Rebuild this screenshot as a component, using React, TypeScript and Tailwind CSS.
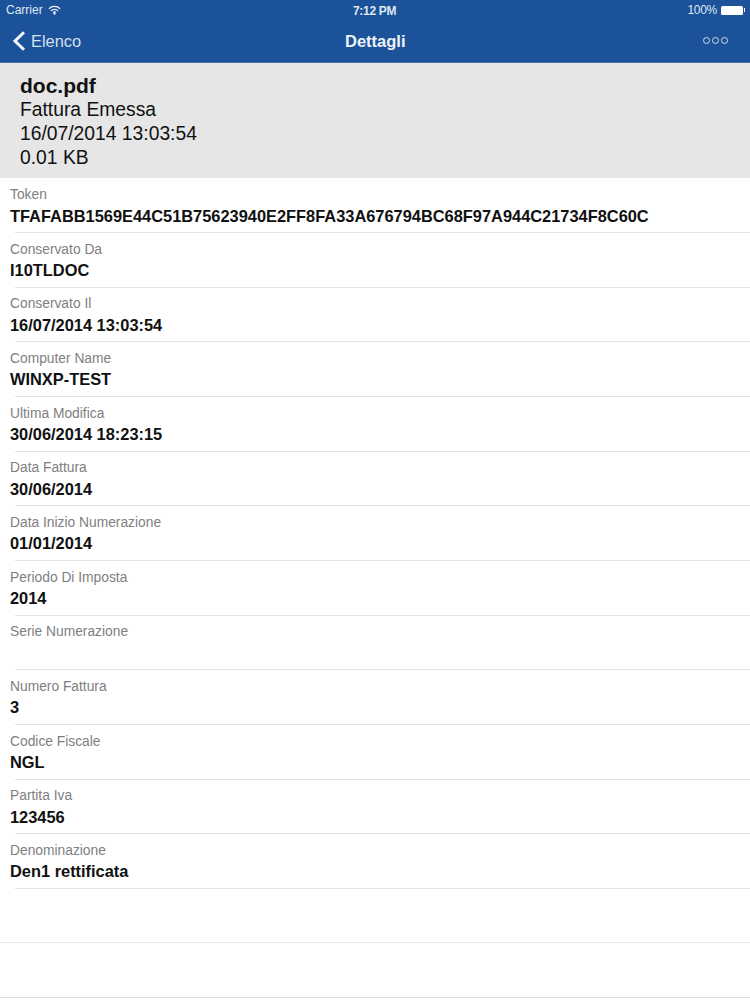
const rows = [
  { label: "Token", value: "TFAFABB1569E44C51B75623940E2FF8FA33A676794BC68F97A944C21734F8C60C" },
  { label: "Conservato Da", value: "I10TLDOC" },
  { label: "Conservato Il", value: "16/07/2014 13:03:54" },
  { label: "Computer Name", value: "WINXP-TEST" },
  { label: "Ultima Modifica", value: "30/06/2014 18:23:15" },
  { label: "Data Fattura", value: "30/06/2014" },
  { label: "Data Inizio Numerazione", value: "01/01/2014" },
  { label: "Periodo Di Imposta", value: "2014" },
  { label: "Serie Numerazione", value: "" },
  { label: "Numero Fattura", value: "3" },
  { label: "Codice Fiscale", value: "NGL" },
  { label: "Partita Iva", value: "123456" },
  { label: "Denominazione", value: "Den1 rettificata" },
];

const StatusBar = () => (
  <div className="relative flex h-[20px] items-center justify-between pl-[6px] pr-[5px] text-[12px] text-[#dfe8f3]">
    <div className="flex items-center gap-[5px]">
      <span>Carrier</span>
      <svg width="13" height="10" viewBox="0 0 14 10" fill="none" stroke="#eef3f9" strokeWidth="1.4">
        <path d="M1 3.6a8.6 8.6 0 0 1 12 0" />
        <path d="M3.2 5.8a5.4 5.4 0 0 1 7.6 0" />
        <path d="M5.4 7.8a2.4 2.4 0 0 1 3.2 0" />
        <circle cx="7" cy="9" r="0.5" fill="#eef3f9" />
      </svg>
    </div>
    <span className="absolute left-[353px] top-[2px] font-bold tracking-[-0.3px]">7:12 PM</span>
    <div className="flex items-center gap-[4px]">
      <span className="tracking-[-0.3px]">100%</span>
      <div className="flex items-center">
        <div className="h-[9px] w-[22px] rounded-[1.5px] bg-white" />
        <div className="ml-[1px] h-[4px] w-[1px] bg-white" />
      </div>
    </div>
  </div>
);

const NavBar = () => (
  <div className="relative flex h-[43px] items-center justify-between border-b border-[#3f6ea9]">
    <div className="flex items-center text-[#d5e0ee]">
      <svg width="14" height="20" viewBox="0 0 14 20" fill="none" stroke="#f4f7fb" strokeWidth="3" className="ml-[12px]">
        <path d="M12 1.2 3 10l9 8.8" />
      </svg>
      <span className="ml-[5px] text-[16.4px]">Elenco</span>
    </div>
    <span className="absolute left-[345px] top-[9px] text-[16.5px] font-bold text-[#eef3f9]">Dettagli</span>
    <div className="mb-[2px] mr-[22px] flex gap-[2px]">
      <div className="h-[7px] w-[7px] rounded-full border border-[#d5e0ee]" />
      <div className="h-[7px] w-[7px] rounded-full border border-[#d5e0ee]" />
      <div className="h-[7px] w-[7px] rounded-full border border-[#d5e0ee]" />
    </div>
  </div>
);

export default function App() {
  return (
    <div className="h-[1000px] w-[750px] overflow-hidden bg-white font-['Liberation_Sans',Arial,sans-serif] text-[#111]">
      <div className="h-[63px] bg-[#1b5299]">
        <StatusBar />
        <NavBar />
      </div>

      <div className="h-[115px] bg-[#e6e6e6] pl-[20px] pt-[9.5px] text-[19.3px] leading-[24.3px]">
        <div className="text-[21px] font-bold leading-[25px]">doc.pdf</div>
        <div>Fattura Emessa</div>
        <div>16/07/2014 13:03:54</div>
        <div>0.01 KB</div>
      </div>

      {rows.map((row) => (
        <div key={row.label} className="ml-[10px] h-[54.67px] pt-[9px]">
          <div className="text-[13.8px] leading-[16px] text-[#808080]">{row.label}</div>
          <div className="mt-[0.5px] h-[24px] text-[16.4px] font-bold leading-[24px]">{row.value}</div>
          <div className="ml-[5px] mt-[4.5px] h-px bg-[#e2e2e2]" />
        </div>
      ))}

      <div className="h-[54.67px] border-b border-[#e8e8e8]" />
      <div className="h-[54.67px] border-b border-[#dedede]" />
    </div>
  );
}
